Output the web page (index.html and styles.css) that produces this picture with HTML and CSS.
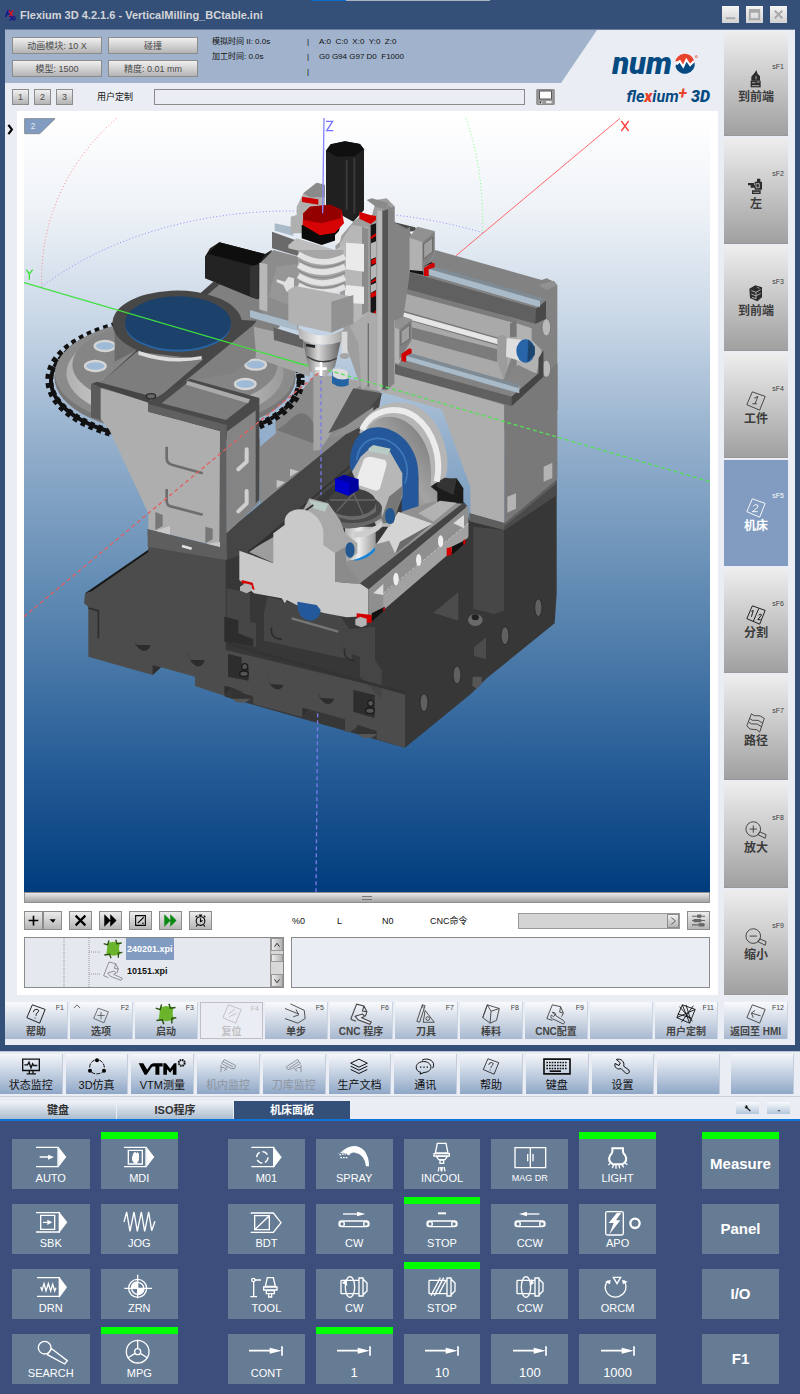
FILE: index.html
```
<!DOCTYPE html>
<html lang="zh-CN">
<head>
    <meta charset="UTF-8">
    <meta name="viewport" content="width=device-width, initial-scale=1.0">
    <title>Flexium 3D</title>
    <link rel="stylesheet" href="styles.css">
</head>
<body>
    <!-- Shared icon symbols -->
    <svg class="sprite" aria-hidden="true">
        <symbol id="tile" viewBox="0 0 24 24"><path d="M8 2 22 7 16 22 2 16Z"/></symbol>
        <symbol id="start" viewBox="0 0 60 60">
            <path d="M14 12 30 8 50 12 48 30 52 46 32 50 10 46 12 30Z" fill="#6ab42c" stroke="none"/>
            <path d="M2 14 14 18 18 4M38 2 42 14 56 12M58 40 46 42 46 56M24 58 20 46 4 48" stroke="#2c5212" stroke-width="4"/>
        </symbol>
        <symbol id="program" viewBox="0 0 60 60">
            <path d="M2 44 18 3 38 8 46 24 42 36M38 8 34 22 46 24M2 44 16 50"/>
            <path d="M14 36 34 30 40 36 32 40 58 52 54 58 22 46Z" fill="#e4e9f1"/>
        </symbol>
        <symbol id="belt" viewBox="0 0 102 72">
            <rect x="6" y="33" width="90" height="17" rx="8"/>
            <circle cx="15" cy="42" r="7"/><circle cx="87" cy="42" r="7"/>
        </symbol>
        <symbol id="feed" viewBox="0 0 102 72">
            <path d="M0 32h70M99 19v28" stroke-width="5"/><path class="solid" d="M62 23 98 32 62 41Z"/>
        </symbol>
        <symbol id="spindle" viewBox="0 0 102 72">
            <path d="M66 9h12v54h-12zM78 12l12 12v24l-12 12M12 16h54M12 56h54M12 16v40M66 16v40"/>
        </symbol>
    </svg>

    <!-- Simulation window -->
    <section class="window">
        <header class="title-bar">
            <svg class="title-icon" viewBox="0 0 36 36"><path d="M2 24 8 6h10M5 15h9" stroke="#14148c" stroke-width="4"/><path d="M12 4 24 24M24 4 12 24" stroke="#e01020" stroke-width="4"/><path d="M13 22h8v5h-5 5v6h-8M25 22v11h4q5-6 0-11z" stroke="#14148c" stroke-width="3"/></svg>
            <h1>Flexium 3D 4.2.1.6 - VerticalMilling_BCtable.ini</h1>
            <div class="window-controls">
                <button class="win-btn" aria-label="最小化"><svg viewBox="0 0 16 16"><path d="M3 12h10"/></svg></button>
                <button class="win-btn" aria-label="最大化"><svg viewBox="0 0 16 16"><path d="M3 3h10v10H3zM3 5h10"/></svg></button>
                <button class="win-btn" aria-label="关闭"><svg viewBox="0 0 16 16"><path d="M4 4l8 8M12 4l-8 8"/></svg></button>
            </div>
        </header>

        <div class="workspace">
            <main class="main">
                <div class="band">
                    <div class="info">
                        <div class="modes">
                            <button class="grey-btn">动画模块: 10 X</button>
                            <button class="grey-btn">碰撞</button>
                            <button class="grey-btn">模型: 1500</button>
                            <button class="grey-btn">精度: 0.01 mm</button>
                        </div>
                        <div class="times">
                            <p>模拟时间 II: 0.0s</p>
                            <p>加工时间: 0.0s</p>
                        </div>
                        <div class="marks">
                            <p>|</p>
                            <p>|</p>
                            <p>|</p>
                        </div>
                        <div class="axes">
                            <p>A:0 &nbsp;C:0 &nbsp;X:0 &nbsp;Y:0 &nbsp;Z:0</p>
                            <p>G0 G94 G97 D0 &nbsp;F1000</p>
                        </div>
                    </div>
                    <div class="brand-num">
                        <span>num</span>
                        <svg viewBox="0 0 70 60"><path d="M4 24A28 27 0 0 1 58 20L48 34 34 18 26 38 14 22Z" fill="#e8412c"/><path d="M4 38 14 24 26 40 36 20 48 36 60 26A28 27 0 0 1 4 38Z" fill="#064a82"/><path d="M8 32 17 23 27 39 36 19 47 35 57 24" fill="none" stroke="#fff" stroke-width="6"/><circle cx="65" cy="10" r="3" fill="none" stroke="#e8412c" stroke-width="2"/></svg>
                    </div>
                </div>

                <div class="custom-row">
                    <button class="grey-btn num-btn">1</button>
                    <button class="grey-btn num-btn">2</button>
                    <button class="grey-btn num-btn">3</button>
                    <label for="custom">用户定制</label>
                    <input class="text-box" id="custom" type="text">
                    <button class="save-btn" aria-label="保存"><svg viewBox="0 0 56 48"><path d="M2 2h52v44H2z" fill="#9a9a9a" stroke="#808080" stroke-width="3"/><path d="M10 6h36v24H10z" fill="#fff" stroke="#555" stroke-width="3"/><path d="M8 38h10v6H8zM30 36h16v7H30z" fill="#eee"/><path d="M10 38h5v5h-5z" fill="#222"/></svg></button>
                    <div class="brand-flex">fle<b>x</b>ium<sup>+</sup> <b class="three">3D</b></div>
                </div>

                <div class="stage">
                    <button class="expand-btn" aria-label="展开"><svg viewBox="0 0 20 36"><path d="M4 5 14 18 4 31"/></svg></button>
                    <div class="panel">
                        <!-- Machine view, one drawing unit is a third of a pixel -->
                        <svg class="view" viewBox="72 354 2058 2322" role="img" aria-label="机床">
                            <defs>
                                <linearGradient id="sky" x1="0" y1="0" x2="0" y2="1">
                                    <stop offset="0" stop-color="#ffffff"/><stop offset=".12" stop-color="#eef2f7"/><stop offset=".27" stop-color="#c6d5e5"/><stop offset=".42" stop-color="#93afcc"/><stop offset=".62" stop-color="#5f89b2"/><stop offset=".82" stop-color="#2a6099"/><stop offset="1" stop-color="#003c7d"/>
                                </linearGradient>
                                <linearGradient id="steel" x1="0" x2="1"><stop offset="0" stop-color="#6a6a6a"/><stop offset=".4" stop-color="#d8d8d8"/><stop offset="1" stop-color="#626262"/></linearGradient>
                                <linearGradient id="chrome" x1="0" x2="1"><stop offset="0" stop-color="#b0b0b0"/><stop offset=".45" stop-color="#ececec"/><stop offset="1" stop-color="#9a9a9a"/></linearGradient>
                                <linearGradient id="drum" x1="0" y1="1" x2="1" y2="0"><stop offset="0" stop-color="#5c5c5c"/><stop offset=".5" stop-color="#a4a4a4"/><stop offset="1" stop-color="#6e6e6e"/></linearGradient>
                            </defs>
                            <rect x="72" y="354" width="2058" height="2322" fill="url(#sky)"/>

                            <!-- Rotation arcs -->
                            <g fill="none" stroke-width="3" stroke-dasharray="3 7">
                                <path d="M350 355C205 480 118 660 125 860" stroke="#ff8a8a"/>
                                <path d="M125 860C310 720 580 630 890 633M1180 645C1280 655 1370 675 1448 698" stroke="#9090ff"/>
                                <path d="M1398 355C1435 460 1450 570 1448 698" stroke="#7dff7d"/>
                            </g>
                            <path d="M1860 355 1368 767" stroke="#ff6a6a" stroke-width="3"/>

                            <!-- Base casting -->
                            <g transform="translate(1020 1140)">
                                <path d="M-345 460 90 130 240 260 375 370 387 420 492 430 650 296 650 640 644 730 440 895 395 940 195 1103-345 950Z" fill="#373737"/>
                                <path d="M400 440 492 450V692L462 702 400 686Z" fill="#474747"/>
                                <path d="M388 398 492 428V450L388 424ZM492 428 650 298V345L492 450Z" fill="#5e5e5e"/>
                                <path d="M492 440 650 310V345L492 452Z" fill="#4a4a4a"/>
                                <path d="M280 698 355 637V722ZM402 802 438 772V838L402 828Z" fill="#4c4c4c"/>
                                <g fill="#606060" stroke="#2a2a2a" stroke-width="3"><ellipse cx="595" cy="683" rx="11" ry="27"/><ellipse cx="495" cy="767" rx="12" ry="27"/><ellipse cx="351" cy="885" rx="12" ry="27"/><ellipse cx="252" cy="968" rx="12" ry="27"/></g>
                                <ellipse cx="406" cy="720" rx="22" ry="18" fill="#6a6a6a"/><ellipse cx="406" cy="712" rx="11" ry="9" fill="#222"/>
                                <path d="M398 890h27v20l-14 16-14-8z" fill="#565656"/>
                            </g>
                            <g transform="translate(60 1290)">
                                <path d="M195 490 387 358V376L215 492Z" fill="#171717"/>
                                <path d="M385 300 617 360V660L1155 790V953L1070 928V908L1010 890 992 905H975V868L867 838 847 861 700 822V800L635 772 613 797 525 768V740L423 712 398 735 205 680V530L192 520 195 490 215 484 385 366Z" fill="#4c4c4c"/>
                                <path d="M398 735V706L423 712ZM613 797V768L635 772ZM847 861V834L867 838Z" fill="#2f2f2f"/>
                                <path d="M383 298 617 360V390L383 350Z" fill="#5e5e5e"/>
                                <path d="M620 475 690 490V575L708 580V650L620 630ZM742 500 960 555 995 610V690L732 632V550Z" fill="#464646"/>
                                <path d="M613 560 655 570V610L700 628V648L613 635ZM624 672 665 682V705L686 712V752L624 740ZM1000 780 1064 795V864L1000 845Z" fill="#2d2d2d"/>
                                <path d="M960 600 1065 590V690L1085 720V810L1020 740V680L960 660Z" fill="#454545"/>
                                <path d="M620 640 1155 790" stroke="#333" stroke-width="8"/>
                                <g fill="#2c2c2c"><path d="M345 612Q340 630 350 645L392 645Q385 665 368 662 338 650 345 612ZM506 658Q502 680 512 690L554 690Q548 712 530 709 502 695 506 658ZM745 728Q740 750 752 762L790 765Q785 780 768 778 740 765 745 728ZM896 770Q892 790 902 804L942 806Q936 824 920 822 890 808 896 770Z"/></g>
                                <g fill="none" stroke="#2d2d2d" stroke-width="5"><path d="M755 592Q748 625 786 628M974 655Q968 690 1005 692M205 534 235 542V625"/></g>
                                <g fill="#555"><ellipse cx="664" cy="802" rx="28" ry="16"/><ellipse cx="1042" cy="908" rx="28" ry="16"/></g>
                                <path d="M634 776 695 798V806H634ZM1012 884 1070 902V912H1012Z" fill="#333"/>
                                <g fill="#555" stroke="#1c1c1c" stroke-width="4"><circle cx="674" cy="710" r="9"/><ellipse cx="672" cy="731" rx="13" ry="8"/><circle cx="1052" cy="820" r="9"/><ellipse cx="1050" cy="842" rx="13" ry="8"/></g>
                                <path d="M815 565 955 605" stroke="#777" stroke-width="7"/>
                            </g>

                            <!-- Right column and cross rails -->
                            <g transform="translate(1080 330)">
                                <path d="M60 845 80 760 455 870 433 885V1238L331 1210V1130L245 898Z" fill="#aeaeae"/>
                                <path d="M433 885 592 760V1108L433 1240Z" fill="#797979"/>
                                <path d="M100 335 225 420 545 510 560 505 582 515 592 526V900L433 885 80 780Z" fill="#828282"/>
                                <path d="M433 880 592 760V900L433 960Z" fill="#797979"/>
                                <path d="M442 1160 468 1150V1196L442 1208ZM551 1070 577 1058V1104L551 1115Z" fill="#b4b4b4"/>
                                <path d="M98 335 165 352 175 362 110 368Z" fill="#4c4c4c"/>
                                <g fill="#b9b9b9" stroke="#666" stroke-width="2"><ellipse cx="559" cy="652" rx="13" ry="26"/><ellipse cx="559" cy="776" rx="13" ry="26"/></g>
                                <path d="M150 487 530 595 558 572V626L526 641 130 535Z" fill="#606060"/>
                                <path d="M528 597 558 572V626L526 641Z" fill="#494949"/>
                                <path d="M205 476 225 470 553 566 540 576Z" fill="#7e8b95"/><path d="M205 476 540 573V592L205 494Z" fill="#a9bac9"/>
                                <path d="M535 525 582 512 592 526 560 540Z" fill="#919191"/>
                                <path d="M120 545 470 640V700L430 810 120 725Z" fill="#a9a9a9"/>
                                <path d="M120 533 468 628V640L120 547ZM155 652 412 718V756L155 686Z" fill="#7b7b7b"/>
                                <path d="M450 640 470 632 472 680 450 682Z" fill="#777"/>
                                <path d="M122 612 418 696" stroke="#777" stroke-width="24"/>
                                <path d="M125 614 418 696" stroke="#e6e6e6" stroke-width="16"/>
                                <path d="M470 640 515 655V690L545 720 530 790 470 775Z" fill="#b2b2b2"/>
                                <path d="M412 680 428 674 442 682V770L432 808 412 756Z" fill="#9c9c9c"/>
                                <path d="M430 808 475 765 530 792 455 862Z" fill="#858585"/>
                                <path d="M440 684 490 690V756L438 740Z" fill="#dedede"/>
                                <ellipse cx="497" cy="723" rx="28" ry="35" fill="#2765a8"/><path d="M505 689 524 710V735L502 757Z" fill="#1d446d"/>
                                <path d="M80 757 455 860 536 790V745L550 722V800L455 888 80 785Z" fill="#606060"/><path d="M455 860 536 790V745L550 722V800L455 888Z" fill="#454545"/>
                                <path d="M140 735 478 828V850L140 752Z" fill="#a9bac9"/><path d="M148 728 480 824 475 834 140 738Z" fill="#7e8b95"/>
                                <path d="M120 370 150 350 150 480 120 545 110 620 75 625V380Z" fill="#858585"/>
                                <path d="M148 383 172 350 224 364V430L190 490 148 480Z" fill="#b1b1b1"/><path d="M187 396 224 364V430L187 490Z" fill="#808080"/><path d="M148 383 172 350 224 364 187 396Z" fill="#919191"/><path d="M191 402 218 382V425L191 447Z" fill="#9f9f9f" stroke="#666" stroke-width="3"/>
                                <path d="M80 640 105 612 155 628V690L116 762 80 750Z" fill="#b1b1b1"/><path d="M118 658 155 628V690L118 750Z" fill="#808080"/><path d="M80 645 105 612 155 628 118 658Z" fill="#919191"/><path d="M123 664 149 644V686L123 705Z" fill="#9f9f9f" stroke="#666" stroke-width="3"/>
                                <path d="M192 474 216 458 224 460V472L206 478V498H192ZM124 732 148 715 155 718V730L138 738V757L124 752Z" fill="#d00000"/>
                                <path d="M150 480 190 484V495L150 486ZM190 470 215 455V460Z" fill="#111"/>
                            </g>

                            <!-- Brace behind the spindle and the machine bed -->
                            <g transform="translate(60 330)">
                                <path d="M715 990 770 930 880 800 1060 830 1085 850 1060 960 720 1180Z" fill="#888"/>
                                <path d="M720 960 765 925 768 970 720 1010Z" fill="#93afcc"/>
                                <path d="M880 790 1040 815 1000 840 940 960 900 1020 880 1022Z" fill="#a5a5a5"/>
                                <path d="M800 940Q850 880 880 940V1000L770 960Z" fill="#737373"/>
                                <path d="M1000 835 1085 850 1060 915 925 970Z" fill="#555"/>
                                <path d="M620 1265 1000 955 1085 850 1050 1040 690 1325 620 1350Z" fill="#454545"/>
                                <path d="M925 985 1060 890V930L985 970Z" fill="#8f8f8f"/>
                                <path d="M690 1325 1000 1060" stroke="#303030" stroke-width="4"/>
                                <path d="M770 1110 796 1116 770 1135ZM810 1076 836 1084 810 1100Z" fill="#c4c4c4"/>
                            </g>

                            <!-- Tool magazine -->
                            <g transform="translate(60 330)">
                                <path d="M535 555 590 515 720 560 780 650 700 700Z" fill="#808080"/><path d="M535 555 580 515 600 522 555 560Z" fill="#444"/>
                                <ellipse cx="465" cy="810" rx="377" ry="184" fill="none" stroke="#111" stroke-width="24" stroke-dasharray="14 12"/>
                                <ellipse cx="465" cy="812" rx="372" ry="180" fill="none" stroke="#111" stroke-width="12" stroke-dasharray="20 6"/>
                                <ellipse cx="465" cy="802" rx="362" ry="172" fill="#777"/>
                                <ellipse cx="465" cy="790" rx="360" ry="166" fill="#8b8b8b"/>
                                <ellipse cx="465" cy="790" rx="326" ry="150" fill="url(#chrome)"/>
                                <ellipse cx="465" cy="764" rx="308" ry="134" fill="#858585"/>
                                <g fill="#9fbad6" stroke="#d5d5d5" stroke-width="7"><ellipse cx="255" cy="708" rx="31" ry="15"/><ellipse cx="226" cy="768" rx="31" ry="15"/><ellipse cx="707" cy="764" rx="31" ry="15"/><ellipse cx="676" cy="822" rx="31" ry="15"/></g>
                                <path d="M284 650V755L350 720Z" fill="#6b6b6b"/>
                                <path d="M660 640 870 690V800L710 745Z" fill="#a6a6a6"/>
                                <path d="M550 745 700 632 708 735 640 790 500 812 420 870Z" fill="#808080"/>
                                <path d="M760 652 850 680V715L762 690Z" fill="#606060"/>
                                <path d="M278 648A192 96 0 0 1 665 630L710 632 700 645 415 880 385 860 230 830 350 720Q285 690 278 648Z" fill="#474747"/>
                                <path d="M350 725 550 748 410 868 238 822Z" fill="#7d7d7d"/>
                                <path d="M355 722Q450 755 545 738V748Q450 766 355 734Z" fill="#dcdcdc"/>
                                <ellipse cx="474" cy="645" rx="158" ry="80" fill="#2764a4"/><ellipse cx="474" cy="639" rx="159" ry="80" fill="#1c426c"/>
                                <path d="M240 835 390 875V905L605 965V1312L385 1258V1210L268 960 240 925Z" fill="#aeaeae"/>
                                <path d="M213 822 242 832V930L213 922Z" fill="#5b5b5b"/>
                                <path d="M213 822 232 815 390 858 392 900 385 902 386 878Z" fill="#454545"/>
                                <path d="M385 875 510 806 718 864 716 900 620 968 600 962 385 905Z" fill="#4a4a4a"/>
                                <path d="M385 882 620 945V968L385 905Z" fill="#606060"/>
                                <path d="M425 880 502 818 690 874 618 930Z" fill="#7d7d7d"/><path d="M502 812 690 868 684 880 498 824Z" fill="#aaa"/>
                                <path d="M600 962 620 968V1350L598 1316Z" fill="#606060"/>
                                <path d="M620 965 716 895V1180L620 1270Z" fill="#848484"/><path d="M707 885 718 866V1170L707 1180Z" fill="#4a4a4a"/>
                                <ellipse cx="393" cy="859" rx="14" ry="8" fill="#666" stroke="#2b2b2b" stroke-width="4"/>
                                <g fill="none" stroke="#6d6d6d" stroke-width="8"><path d="M440 1010V1045Q440 1060 455 1064L548 1090M440 1137V1172Q440 1187 455 1190L548 1214"/></g>
                                <g fill="none" stroke="#cfcfcf" stroke-width="12" stroke-linecap="round"><path d="M680 1018V1055L655 1078M680 1143V1180L655 1204"/></g>
                                <path d="M406 1206 428 1215V1248L406 1260ZM556 1250 578 1256V1288L556 1300Z" fill="#777"/><path d="M406 1262 450 1248V1275ZM556 1302 600 1296V1312Z" fill="#c9c9c9"/>
                                <path d="M383 1258 620 1316V1350L383 1282Z" fill="#5e5e5e"/><path d="M486 1308 515 1316" stroke="#e2e2e2" stroke-width="8"/>
                            </g>

                            <!-- Spindle head -->
                            <g transform="translate(60 330)">
                                <path d="M918 122 932 103 975 94 1020 102 1032 118V300L1000 335 918 290Z" fill="#202020"/><path d="M918 122 932 103 975 94 1020 102 1032 118 1005 138 950 140Z" fill="#101010"/><path d="M980 150V300M1003 145V310" stroke="#3a3a3a" stroke-width="6"/>
                                <path d="M555 440 570 415 598 397 735 432 755 420V540L712 568 690 560 555 505Z" fill="#232323"/><path d="M555 440 598 397 735 432 712 470 565 432Z" fill="#0e0e0e"/><path d="M690 470 716 462V568L690 560Z" fill="#333"/>
                                <path d="M720 460 760 420 835 440V660L740 620 718 600Z" fill="#8c8c8c"/><path d="M718 458 742 462V605L718 598Z" fill="#b8b8b8"/>
                                <path d="M756 365 840 395V440L756 415Z" fill="#696969"/><path d="M764 340 820 352V378L764 362Z" fill="#a9bac9"/>
                                <path d="M690 600 832 640V662L690 622Z" fill="#a9bac9"/>
                                <path d="M770 470 840 460V600L745 560Z" fill="#969696"/>
                                <path d="M830 290 850 250 890 218 915 225V330L860 370 812 370V320L830 315Z" fill="#b0b0b0"/><path d="M850 250 890 218 915 225V262L870 262Z" fill="#8a8a8a"/>
                                <path d="M846 260 895 268V284L846 276Z" fill="#cc0000"/>
                                <path d="M945 400 1000 335 1020 320 1050 340 1068 270 1100 265 1125 290V820L1100 842 1025 838 975 700Z" fill="#9e9e9e"/>
                                <path d="M995 345 1045 352V620L1000 640V570L975 520 960 400Z" fill="#b7b7b7"/>
                                <path d="M1026 350 1045 356V605L1026 615Z" fill="#8b8b8b"/>
                                <path d="M1052 345 1068 340V610L1052 618Z" fill="#161616"/>
                                <path d="M1018 305 1050 315 1068 318V330L1052 342 1018 326ZM1052 380 1068 370V378L1052 388ZM1054 450 1068 444V460L1054 464ZM1052 515 1068 505V512L1052 520ZM1052 550 1068 543V558L1052 564ZM1050 618 1068 600V608Z" fill="#d40000"/>
                                <path d="M1053 400 1068 394V442L1053 448ZM1053 470 1068 462V500L1053 510ZM1053 525 1068 518V540L1053 548Z" fill="#b7b7b7"/>
                                <path d="M1072 300 1086 304V838L1072 842Z" fill="#b9b9b9"/><path d="M1086 300 1122 290V820L1100 842 1086 838Z" fill="#858585"/>
                                <path d="M1088 304 1104 298V836L1088 838Z" fill="#555"/><path d="M1040 270 1055 265 1104 278 1100 298 1070 292Z" fill="#8a8a8a"/>
                                <path d="M1104 285 1120 305 1120 335 1168 360V500L1150 620 1104 640Z" fill="#838383"/>
                                <path d="M990 650 1045 605 1072 612V842L1050 838V820L1025 838 1015 700Z" fill="#ababab"/><path d="M1045 640V830" stroke="#6e6e6e" stroke-width="4"/>
                                <path d="M978 398 1032 402V485L978 478ZM975 525 1032 530V582L975 578Z" fill="#eaeaea"/>
                                <path d="M805 405 830 385 945 420 975 400V430L935 445 805 415Z" fill="#bdbdbd"/>
                                <path d="M835 420H970L978 540 835 540Z" fill="#a6a6a6"/>
                                <g fill="none" stroke="#e3e3e3" stroke-width="17"><path d="M835 432Q900 475 975 440M835 465Q900 505 975 470M835 497Q900 538 975 503M835 526Q905 565 975 530"/></g>
                                <g fill="none" stroke="#8b8b8b" stroke-width="4"><path d="M835 450Q900 490 975 455M835 482Q900 522 975 487M835 513Q900 552 975 518"/></g>
                                <path d="M845 345 960 350 950 390 905 405 845 385Z" fill="#0b0b0b"/>
                                <path d="M850 310 870 290 930 284 965 300 972 340 945 368 900 376 848 345Z" fill="#d60404"/><path d="M850 310 870 290 930 284 965 300 962 325 905 340 850 330Z" fill="#940000"/>
                                <path d="M945 375 970 350 960 395 945 408Z" fill="#ececec"/>
                                <path d="M770 508 795 515 805 500 822 505V540L800 545 790 525 770 516Z" fill="#e0e0e0"/>
                                <path d="M805 540 825 528 1000 560 978 640 935 668 805 640Z" fill="#b2b2b2"/><path d="M934 575 1000 555V640L934 668Z" fill="#929292"/>
                                <path d="M832 650Q905 700 978 655V690Q905 720 838 685Z" fill="url(#chrome)"/>
                                <path d="M850 695Q905 715 962 695L945 770 915 800 870 785 858 740Z" fill="url(#steel)"/>
                                <path d="M858 705 885 710" stroke="#222" stroke-width="8"/><path d="M862 740Q905 768 950 745" stroke="#3f3f3f" stroke-width="4" fill="none"/>
                                <path d="M965 665H982V735H965Z" fill="#dadada"/><ellipse cx="974" cy="738" rx="15" ry="9" fill="#a5a5a5"/>
                                <path d="M936 785H986V825Q960 838 936 820Z" fill="#2362a3"/><path d="M938 778Q960 770 986 785V805Q960 815 938 798Z" fill="#dcdcdc"/>
                            </g>

                            <!-- Tilting table -->
                            <g transform="translate(1020 1140)">
                                <path d="M280 300 350 295 370 325V375L270 400Z" fill="#1c1c1c"/><path d="M292 290 350 298 340 345 290 320Z" fill="#343434"/>
                                <path d="M58 160C75 75 175 45 240 85 305 125 335 230 318 290L270 320 180 150Z" fill="#b5b5b5"/>
                                <path d="M66 150C95 85 175 75 225 110 285 155 305 240 290 305" fill="none" stroke="#ececec" stroke-width="18"/>
                                <path d="M80 150C115 95 180 100 222 145 275 200 275 260 272 320L292 335V365L235 405V290Z" fill="url(#drum)"/>
                                <path d="M30 260C28 175 70 138 120 142 190 150 235 215 235 280V405L185 392V330L60 330Z" fill="#24589a"/>
                                <path d="M50 240C60 170 120 160 165 195 200 225 210 270 195 310" fill="none" stroke="#3d78b8" stroke-width="5"/>
                                <path d="M185 395 275 365 295 365 378 372 85 625 0 600-60 560-80 500 110 490Z" fill="#919191"/>
                                <path d="M175 395 280 432 165 520 148 482 110 492Z" fill="#d4d4d4"/><path d="M180 485 282 428 165 522Z" fill="#6c6c6c"/>
                                <path d="M235 400 300 362 350 368 280 425Z" fill="#b2b2b2"/>
                                <path d="M36 275 62 230 90 205 150 215 187 280V350L150 440 110 440 60 330Z" fill="#b7b7b7"/><path d="M147 350 187 318V345L160 430 120 430Z" fill="#777"/>
                                <path d="M72 238Q80 226 100 232L135 240Q142 246 138 262L120 325Q115 335 100 330L55 315 52 290Z" fill="#ececec"/>
                                <path d="M86 205 100 195 152 206 145 225 86 214Z" fill="#b8cbc4"/>
                                <ellipse cx="150" cy="408" rx="15" ry="24" fill="#22588f"/>
                                <path d="M15 440H107V500Q70 545 15 540Z" fill="url(#chrome)"/><path d="M40 540Q80 530 105 502V512Q85 536 50 542Z" fill="#1684d8"/>
                                <path d="M-50 400V425Q35 470 125 415V385Z" fill="#686868"/><ellipse cx="36" cy="385" rx="90" ry="44" fill="#4a4a4a"/>
                                <path d="M-35 370V395Q40 445 108 395V370Z" fill="#6b6b6b"/><ellipse cx="36" cy="367" rx="72" ry="42" fill="#414141"/>
                                <path d="M-30 360 105 360M36 330 70 405M50 330-10 395" stroke="#666" stroke-width="4"/>
                                <path d="M42 455Q95 455 127 420V440Q100 470 42 473Z" fill="#cdcdcd"/>
                                <path d="M-15 296 12 284 56 298V330L26 347-15 332Z" fill="#0000a0"/><path d="M-15 296 28 308 26 347-15 332Z" fill="#0000cc"/>
                                <!-- Front bell housing -->
                                <path d="M-110 390-92 355-35 370 0 420 15 460 52 490V520L15 550 60 600-15 605-48 520Z" fill="#a8a8a8"/>
                                <path d="M-92 360-35 372-45 395-80 385Z" fill="#b7cbc4"/>
                                <path d="M-275 515-198 470V550Z" fill="#9d9d9d"/><path d="M-275 515-80 375" stroke="#2e2e2e" stroke-width="5"/>
                                <path d="M-302 512-265 525-200 550V460L-166 435V420C-160 375-70 370-50 450V495L-15 520V605L60 612 85 625V708L20 712-45 700-120 680-160 660-165 670-175 655-258 640-302 600Z" fill="#c9c9c9"/>
                                <path d="M-15 520 15 500 20 555 60 600 55 612-15 605Z" fill="#8b8b8b"/>
                                <ellipse cx="30" cy="510" rx="14" ry="23" fill="#22588f"/>
                                <path d="M85 628 385 376V468L130 690 85 712Z" fill="#8f8f8f"/><path d="M60 610 368 370 382 376 85 628Z" fill="#454545"/>
                                <path d="M130 645 385 430V472L130 690Z" fill="#a2a2a2"/><path d="M130 640 385 430" stroke="#c8c8c8" stroke-width="3" stroke-dasharray="9 5"/>
                                <path d="M100 640 130 612V645ZM340 430 372 405V445Z" fill="#dcdcdc"/>
                                <g fill="#eee"><ellipse cx="168" cy="597" rx="8" ry="19"/><ellipse cx="236" cy="540" rx="8" ry="18"/><ellipse cx="302" cy="484" rx="8" ry="18"/></g>
                                <path d="M95 700 134 680V690L95 725ZM335 500 376 480V490L335 525Z" fill="#111"/>
                                <path d="M50 700 95 705V728H80L50 715ZM130 684 134 680V692L130 695ZM320 505 335 500V525L320 528ZM370 480 376 478V492L370 496ZM-295 600-262 608-256 630-262 628-268 616-295 610Z" fill="#d40000"/>
                                <path d="M46 718 60 710 80 716V735L65 742 46 735ZM-300 620-285 610-265 615V632L-280 640-300 632Z" fill="#b4b4b4"/>
                                <path d="M-128 665Q-130 715-90 722-60 720-58 690L-70 675Z" fill="#23599a"/>
                            </g>

                            <!-- Axes over the model -->
                            <g fill="none" stroke-width="4">
                                <path d="M72 848 925 1098" stroke="#3fe03f"/>
                                <path d="M965 1105 2130 1445" stroke="#55e055" stroke-dasharray="12 8"/>
                                <path d="M972 354 968 640" stroke="#8585ff"/>
                                <path d="M963 1120V1485M953 2140 948 2676" stroke="#7a7ae8" stroke-dasharray="12 9"/>
                                <path d="M955 1120 710 1320 72 1850" stroke="#e06060" stroke-dasharray="12 9"/>
                                <path d="M946 1106h34M963 1086v42" stroke="#fff" stroke-width="8"/>
                                <path d="M978 364h20L980 392h20" stroke="#7373ff"/>
                                <path d="M1864 363l22 30M1886 363l-22 30" stroke="#ff4040"/>
                                <path d="M79 809l9 13 10-13M88 822v17" stroke="#3fe03f"/>
                            </g>
                            <path d="M74 356H165L119 401H74Z" fill="#819cc0" stroke="#848c98" stroke-width="3"/>
                            <text class="view-no" x="92" y="388">2</text>
                        </svg>
                        <div class="splitter"><span></span></div>

                        <div class="tools">
                            <div class="split-btn">
                                <button class="tool-btn" aria-label="添加"><svg viewBox="0 0 24 24"><path d="M12 3v18M3 12h18"/></svg></button><button class="tool-btn" aria-label="更多"><svg viewBox="0 0 24 24"><path d="M10 11h5l-2 3z"/></svg></button>
                            </div>
                            <button class="tool-btn" aria-label="删除"><svg viewBox="0 0 24 24"><path d="M3 3l18 18M21 3 3 21" stroke-width="4"/></svg></button>
                            <button class="tool-btn" aria-label="快进"><svg viewBox="0 0 24 24"><path d="M2 4l8 8-8 8zM13 4l8 8-8 8z" fill="#000"/></svg></button>
                            <button class="tool-btn thin" aria-label="编辑"><svg viewBox="0 0 24 24"><path d="M3 3h18v18H3zM7 17 18 6M15 17h3"/></svg></button>
                            <button class="tool-btn go" aria-label="运行"><svg viewBox="0 0 24 24"><path d="M2 4l8 8-8 8zM13 4l8 8-8 8z"/></svg></button>
                            <button class="tool-btn thin" aria-label="计时"><svg viewBox="0 0 24 24"><circle cx="12" cy="13" r="8"/><path d="M12 8v6l4-2M12 5V2M9 2h6M3 6l3-3M18 3l3 3M6 20l-2 3M18 20l2 3"/></svg></button>
                            <span class="status">%0</span>
                            <span class="status">L</span>
                            <span class="status">N0</span>
                            <label for="cnc">CNC命令</label>
                            <div class="command">
                                <input class="text-box" id="cnc" type="text">
                                <button class="grey-btn" aria-label="发送"><svg viewBox="0 0 12 12"><path d="M4 2l5 4-5 4"/></svg></button>
                            </div>
                            <button class="tool-btn sliders" aria-label="选项"><svg viewBox="0 0 36 36"><path d="M0 6h36M0 18h36M0 30h36"/><path d="M16 3h8v6h-8zM6 15h18v6H6zM20 27h12v6H20z" fill="#666"/></svg></button>
                        </div>

                        <div class="lists">
                            <div class="tree">
                                <svg class="tree-lines" viewBox="0 0 78 50"><path d="M39 0v50M64 0v50M64 14h12M64 36h12"/></svg>
                                <ul>
                                    <li class="selected"><svg><use href="#start"/></svg><span>240201.xpi</span></li>
                                    <li><svg><use href="#program"/></svg><span>10151.xpi</span></li>
                                </ul>
                                <div class="scroll">
                                    <button aria-label="上移"><svg viewBox="0 0 12 12"><path d="M3 8l3-4 3 4"/></svg></button>
                                    <span class="thumb"></span>
                                    <button aria-label="下移"><svg viewBox="0 0 12 12"><path d="M3 4l3 4 3-4"/></svg></button>
                                </div>
                            </div>
                            <textarea class="text-box log" aria-label="消息"></textarea>
                        </div>
                    </div>
                </div>
            </main>

            <nav class="side">
                <button class="side-key"><kbd>sF1</kbd><svg class="model" viewBox="0 0 48 54"><path d="M20 8l5-8 4 12 7 6v14H10V20z"/><path d="M8 32h30v20H8z"/><path class="cut" d="M12 38h10M26 36h9M12 47h22M24 18v10"/></svg><span>到前端</span></button>
                <button class="side-key"><kbd>sF2</kbd><svg class="model" viewBox="0 0 48 54"><path d="M20 14h22v24H20zM0 18h18v7H0zM8 25h16v7H8zM12 40h26v11H12zM27 5h10v10H27z"/><path class="cut" d="M24 20h10v12H24zM16 46h18"/></svg><span>左</span></button>
                <button class="side-key"><kbd>sF3</kbd><svg class="model" viewBox="0 0 48 54"><path d="M4 14 22 4 42 10V40L28 52 6 42Z"/><path class="cut" d="M10 20l14 5 14-8M10 30l14 6 14-8M12 40l12 4M24 25v20M28 10l6 3"/></svg><span>到前端</span></button>
                <button class="side-key"><kbd>sF4</kbd><svg viewBox="0 0 24 24"><use href="#tile"/><path d="M10 9l4-2-3 8M8 15h5"/></svg><span>工件</span></button>
                <button class="side-key active"><kbd>sF5</kbd><svg viewBox="0 0 24 24"><use href="#tile"/><path d="M9 10q2-3 5-1 1 2-2 4l-4 3h6"/></svg><span>机床</span></button>
                <button class="side-key dark"><kbd>sF6</kbd><svg viewBox="0 0 24 24"><use href="#tile"/><path d="M15 5 9 19M7 8l2-1-2 7M15 12q3-2 3 0l-4 5h3"/></svg><span>分割</span></button>
                <button class="side-key"><kbd>sF7</kbd><svg viewBox="0 0 24 24"><path d="M7 2q3 3 6 2t8 3l-5 15q-3-4-7-3t-7-4zM5 7q3 3 6 2t8 3M4 11q3 3 6 2t8 3"/></svg><span>路径</span></button>
                <button class="side-key"><kbd>sF8</kbd><svg viewBox="0 0 24 24"><circle cx="9" cy="11" r="8"/><path d="M9 7v8M5 11h8M16 14l7 3-1 4-8-4z"/></svg><span>放大</span></button>
                <button class="side-key"><kbd>sF9</kbd><svg viewBox="0 0 24 24"><circle cx="9" cy="11" r="8"/><path d="M5 11h8M16 14l7 3-1 4-8-4z"/></svg><span>缩小</span></button>
            </nav>

            <nav class="f-keys">
                <button class="f-key dark"><kbd>F1</kbd><svg viewBox="0 0 24 24"><use href="#tile"/><path d="M9 10q1-4 4-3 4 1 0 4-1 1-1 3M11 16v1"/></svg><span>帮助</span></button>
                <button class="f-key"><kbd>F2</kbd><svg class="caret" viewBox="0 0 10 6"><path d="M1 5l4-4 4 4"/></svg><svg viewBox="-3 -5 30 30"><use href="#tile" width="24" height="24"/><path d="M12 7v10M7 12h10"/></svg><span>选项</span></button>
                <button class="f-key"><kbd>F3</kbd><svg viewBox="0 0 60 60"><use href="#start"/></svg><span>启动</span></button>
                <button class="f-key" disabled><kbd>F4</kbd><svg viewBox="0 0 24 24"><use href="#tile"/><path d="M8 12l7-5M9 15l8-4"/></svg><span>复位</span></button>
                <button class="f-key"><kbd>F5</kbd><svg viewBox="0 0 24 24"><path d="M6 1l15 7 1 9-8 5-14-5M0 6l15 6M12 7l3 6-6 2"/></svg><span>单步</span></button>
                <button class="f-key"><kbd>F6</kbd><svg class="fine" viewBox="0 0 60 60"><use href="#program"/></svg><span>CNC 程序</span></button>
                <button class="f-key"><kbd>F7</kbd><svg viewBox="0 0 24 24"><path d="M2 20 8 2l3 1-6 18zM11 8l10 13H9zM8 2l1 4"/><circle cx="14" cy="17" r="2"/></svg><span>刀具</span></button>
                <button class="f-key"><kbd>F8</kbd><svg viewBox="0 0 24 24"><path d="M8 2l13 4-3 13-7 3-8-6zM8 2 3 16M8 2l4 7-1 13M12 9l9-3"/></svg><span>棒料</span></button>
                <button class="f-key"><kbd>F9</kbd><svg viewBox="0 0 24 24"><path d="M2 17 8 2l9 2 3 7-2 4M17 4l-1 6 4 1M2 17l6 2M7 13q-2 4 3 5l10 5q3-2 0-4l-8-5q0-4-4-4l3 3-2 2z"/></svg><span>CNC配置</span></button>
                <button class="f-key" aria-label="F10"></button>
                <button class="f-key dark"><kbd>F11</kbd><svg viewBox="0 0 24 24"><use href="#tile"/><path d="M8 2l8 20M22 7 2 16M5 4l14 16M20 3 7 21M3 12l14 4M12 2l5 16"/></svg><span>用户定制</span></button>
            </nav>
            <button class="f-key back"><kbd>F12</kbd><svg viewBox="0 0 24 24"><use href="#tile"/><path d="M7 11l10 3M11 8l-4 3 2 5"/></svg><span>返回至 HMI</span></button>
        </div>
    </section>

    <!-- HMI application bar -->
    <nav class="app-bar">
        <button class="app-btn"><svg viewBox="0 0 54 50"><path d="M2 3h50v34H2zM22 37v8M33 37v8M14 47h28M7 20h10l4-8 6 17 5-12 3 5h11" stroke-width="4"/></svg><span>状态监控</span></button>
        <button class="app-btn"><svg viewBox="0 0 54 50"><path d="M20 6Q5 12 5 28M34 6q14 6 15 22M10 42q16 10 34 0" stroke-width="3" stroke-dasharray="12 4"/><path class="fill" d="M27 0a6 6 0 1 1 0 12 6 6 0 0 1 0-12M6 32a6 6 0 1 1 0 12 6 6 0 0 1 0-12M48 32a6 6 0 1 1 0 12 6 6 0 0 1 0-12"/></svg><span>3D仿真</span></button>
        <button class="app-btn"><svg class="wide" viewBox="413 518 146 50"><path d="M415 533h14l12 20 10-15q4-5 10-5h27v10h-10v25h-12v-25h-6q-4 0-6 3l-15 22h-6zM490 568v-35h8l13 17 12-17h7v35h-11v-17l-8 11-10-11v17z" fill="#000" stroke="none"/><circle cx="546" cy="532" r="9" stroke-width="6" stroke-dasharray="5 2"/></svg><span>VTM测量</span></button>
        <button class="app-btn" disabled><svg viewBox="0 0 54 50"><path d="M16 4 50 22l-4 10-12-2L8 16zM12 10l30 16M6 20v22M6 28h10l8 8M24 26l-8 12"/></svg><span>机内监控</span></button>
        <button class="app-btn" disabled><svg viewBox="0 0 54 50"><path d="M38 4 4 26l4 8 12-2 26-16zM42 10 12 30M48 20v22M48 28H38l-8 8M28 30l8 10"/></svg><span>刀库监控</span></button>
        <button class="app-btn"><svg viewBox="0 0 54 50"><path d="M27 3 52 15 27 27 2 15zM2 24l25 12 25-12M2 34l25 12 25-12" stroke-width="3"/></svg><span>生产文档</span></button>
        <button class="app-btn"><svg viewBox="0 0 54 50"><path d="M22 10c-28 2-26 30-8 32l-2 6 12-5c30-2 26-33-2-33zM18 6c18-10 44 4 32 24" stroke-width="3"/><path d="M12 27h4M22 27h4M32 27h4" stroke-width="4"/></svg><span>通讯</span></button>
        <button class="app-btn"><svg class="unit" viewBox="1 1 22 22"><use href="#tile" width="24" height="24"/><path d="M9 10q1-4 4-3 4 1 0 4-1 1-1 3M11 16v1"/></svg><span>帮助</span></button>
        <button class="app-btn"><svg class="wide keyboard" viewBox="0 0 84 50"><path d="M3 3h78v44H3z" stroke-width="5"/><path d="M10 13h64M10 22h60M10 31h64" stroke-width="4" stroke-dasharray="5 3"/><path d="M20 39h34" stroke-width="5"/></svg><span>键盘</span></button>
        <button class="app-btn"><svg viewBox="0 0 54 50"><path d="M10 4l12 10-4 8-12-6c-3 12 8 20 18 15l14 14c6 4 14-2 10-9L32 24C36 12 24-1 10 4z" stroke-width="3"/></svg><span>设置</span></button>
        <button class="app-btn" aria-label="空"></button>
        <button class="app-btn last" aria-label="空"></button>
    </nav>

    <div class="tab-bar">
        <div class="tabs" role="tablist">
            <button class="tab" role="tab">键盘</button>
            <button class="tab" role="tab">ISO程序</button>
            <button class="tab active" role="tab" aria-selected="true">机床面板</button>
        </div>
        <button class="mini-btn" aria-label="设置"><svg viewBox="0 0 20 20"><path d="M4 2l5 3v4l8 8-2 2-8-8H4L1 6l4 1z" fill="#111"/></svg></button>
        <button class="mini-btn" aria-label="最小化"><svg viewBox="0 0 20 20"><path d="M7 16h6v2H7z" fill="#111"/></svg></button>
    </div>

    <!-- Machine panel -->
    <section class="machine-panel">
        <div class="group modes-group">
            <button class="key"><svg viewBox="103 91 102 72"><path d="M109 98h66v58h-66M120 127h30"/><path class="solid" d="M176 96l24 31-24 31zM145 120l18 7-18 8z"/></svg><span>AUTO</span></button>
            <button class="key lit"><svg viewBox="368 91 102 72"><path d="M374 98h66v58h-66M387 107h42v41h-42z"/><path class="solid" d="M441 96l24 31-24 31zM398 128l5-14 5-2 4 4 3-4 4 6v18l-6 10h-9l-6-10z"/></svg><span>MDI</span></button>
            <button class="key"><svg viewBox="103 284 102 72"><path d="M109 292h70v58h-70M123 300h42v42h-42zM130 321h18"/><path class="solid" d="M179 290l24 31-24 31zM143 313l15 8-15 8z"/></svg><span>SBK</span></button>
            <button class="key"><svg viewBox="368 284 102 72"><path d="M374 320l8-30 10 58 12-58 10 58 12-58 10 58 12-58 9 56 10-28"/></svg><span>JOG</span></button>
            <button class="key"><svg viewBox="103 478 102 72"><path d="M112 486h67v56h-67M123 514l4 10 6-20 6 22 7-22 7 22 6-20 6 20 4-10"/><path class="solid" d="M179 484l23 31-23 31z"/></svg><span>DRN</span></button>
            <button class="key"><svg viewBox="368 478 102 72"><circle cx="415" cy="518" r="27"/><circle cx="415" cy="518" r="18"/><path d="M415 477v71M375 518h83"/><path class="solid" d="M415 518V497q-20 1-21 21zM415 518v21q20-1 21-21z"/></svg><span>ZRN</span></button>
            <button class="key"><svg viewBox="103 671 102 72"><circle cx="135" cy="694" r="19"/><path d="M156 697l47 36-8 10-52-28z"/></svg><span>SEARCH</span></button>
            <button class="key lit"><svg viewBox="368 671 102 72"><circle cx="415" cy="706" r="34"/><circle cx="415" cy="706" r="9"/><path d="M415 672v25M407 711l-22 14M423 711l22 14"/></svg><span>MPG</span></button>
        </div>

        <div class="group machine-group">
            <button class="key"><svg viewBox="753 91 102 72"><path d="M760 98h67v58h-67"/><circle cx="793" cy="128" r="17" stroke-dasharray="18 8"/><path class="solid" d="M827 96l24 32-24 31z"/></svg><span>M01</span></button>
            <button class="key"><svg viewBox="1010 91 102 72"><path class="solid" d="M1018 116q42-40 75-7 14 20 13 46h-9q-4-36-32-41-14-2-18 8-10-12-39-6z"/><path d="M1018 122q8-8 30-2M1020 129h24" stroke-dasharray="5 3"/></svg><span>SPRAY</span></button>
            <button class="key"><svg viewBox="72 91 102 72"><path d="M109 86h26l6 29h-38zM99 117h46v7H99zM106 125h33l-7 10h-19zM117 136h11v10h-11zM114 157l-2 13M119 157l2 13M124 157l-2 13M129 157l3 13"/></svg><span>INCOOL</span></button>
            <button class="key"><svg viewBox="336 91 102 72"><path d="M342 99h92v60h-92zM388 99v60M380 118v22M396 118v22"/></svg><span class="long">MAG DR</span></button>
            <button class="key lit"><svg viewBox="600 91 102 72"><path d="M634 101h32q-2 14 6 20 10 18-8 28h-28q-18-10-8-28 8-6 6-20z" stroke-width="6"/><path d="M622 151l6-5M634 160l4-10M645 162v-11M656 161l-2-10M668 158l-5-9M679 150l-7-5"/></svg><span>LIGHT</span></button>

            <button class="key"><svg viewBox="753 284 102 72"><path d="M758 293h68l23 29-23 29h-68M770 301h44v42h-44zM770 343l44-42"/></svg><span>BDT</span></button>
            <button class="key"><svg viewBox="0 0 102 72"><use href="#belt"/><path d="M18 12h45"/><path class="solid" d="M60 5l25 7-25 7z"/></svg><span>CW</span></button>
            <button class="key lit"><svg viewBox="0 0 102 72"><use href="#belt"/><path d="M39 10h24" stroke-width="6"/></svg><span>STOP</span></button>
            <button class="key"><svg viewBox="0 0 102 72"><use href="#belt"/><path d="M40 12h39"/><path class="solid" d="M42 5l-24 7 24 7z"/></svg><span>CCW</span></button>
            <button class="key"><svg viewBox="600 284 102 72"><rect x="614" y="289" width="53" height="70" rx="5"/><path class="solid" d="M648 292l-25 31h15l-13 34 33-42h-13l16-23z"/><circle cx="702" cy="324" r="14" stroke-width="7"/></svg><span>APO</span></button>

            <button class="key"><svg viewBox="753 478 102 72"><circle cx="766" cy="493" r="5"/><path d="M771 493h18M767 498v44M757 543h20M808 486h18l6 26h-30zM797 514h40v9h-40zM805 525h24v9h-24zM812 534h9v10h-9z"/></svg><span>TOOL</span></button>
            <button class="key"><svg viewBox="0 0 102 72"><use href="#spindle"/><ellipse cx="39" cy="36" rx="14" ry="31"/><path class="solid" d="M28 12l3 20-16-8z"/></svg><span>CW</span></button>
            <button class="key lit"><svg viewBox="0 0 102 72"><use href="#spindle"/><path d="M46 8 18 62M56 8 28 62M62 18 42 56"/></svg><span>STOP</span></button>
            <button class="key"><svg viewBox="0 0 102 72"><use href="#spindle"/><ellipse cx="39" cy="36" rx="14" ry="31"/><path class="solid" d="M54 12l-4 22 13-10z"/></svg><span>CCW</span></button>
            <button class="key"><svg viewBox="600 478 102 72"><path d="M621 495q-16 20-2 38 14 15 34 10 22-10 22-30 0-10-6-18M637 485h22l-11 19z" stroke-width="4"/><path class="solid" d="M612 498l17-6-2 14zM680 498l-17-6 3 14z"/></svg><span>ORCM</span></button>

            <button class="key"><svg viewBox="0 0 102 72"><use href="#feed"/></svg><span>CONT</span></button>
            <button class="key lit"><svg viewBox="0 0 102 72"><use href="#feed"/></svg><span class="num">1</span></button>
            <button class="key"><svg viewBox="0 0 102 72"><use href="#feed"/></svg><span class="num">10</span></button>
            <button class="key"><svg viewBox="0 0 102 72"><use href="#feed"/></svg><span class="num">100</span></button>
            <button class="key"><svg viewBox="0 0 102 72"><use href="#feed"/></svg><span class="num">1000</span></button>
        </div>

        <div class="group page-group">
            <button class="key page lit">Measure</button>
            <button class="key page">Panel</button>
            <button class="key page">I/O</button>
            <button class="key page">F1</button>
        </div>
    </section>
</body>
</html>
```
FILE: styles.css
```
:root {
    --frame: #355078;
    --pale: #eaedf3;
    --band: #a0b2cc;
    --panel: #3c4f7c;
    --key: #667c95;
    --accent: #819cc0;
    --line: #8c8c8c;
}

* {
    box-sizing: border-box;
}

body {
    margin: 0;
    min-height: 100vh;
    display: flex;
    flex-direction: column;
    background: var(--pale);
    color: #111;
    font-family: "Liberation Sans", "Noto Sans CJK SC", sans-serif;
    font-size: 9px;
    line-height: 12px;
}

button,
input,
textarea {
    font: inherit;
    color: inherit;
    padding: 0;
    margin: 0;
    border-radius: 0;
}

button {
    border: none;
    white-space: nowrap;
}

p,
ul,
h1 {
    margin: 0;
    padding: 0;
}

svg {
    display: block;
    fill: none;
    stroke: currentColor;
    overflow: visible;
}

.sprite {
    position: absolute;
    width: 0;
    height: 0;
}

/* Window frame */
.window {
    border: 5px solid var(--frame);
    border-top: none;
    border-bottom-width: 6px;
    background: var(--pale);
}

.title-bar {
    display: flex;
    align-items: center;
    height: 30px;
    background: linear-gradient(90deg, transparent 306px, #0a6cc8 306px, #0a6cc8 341px, #aab4c0 341px, #aab4c0 485px, transparent 485px) no-repeat 0 0 / 100% 1px, var(--frame);
    border-bottom: 1px solid #6b7f9f;
}

.title-icon {
    width: 12px;
    height: 12px;
    margin-right: 3px;
}

.title-bar h1 {
    flex: 1;
    font-size: 11px;
    font-weight: bold;
    color: #d3d5d9;
}

.window-controls {
    display: flex;
    gap: 7px;
    margin-right: 8px;
}

.win-btn {
    width: 17px;
    height: 17px;
    padding: 1px;
    background: linear-gradient(#f4f4f4, #d2d2d2);
    color: #a8a8a8;
}

.win-btn svg {
    stroke-width: 2;
}

.workspace {
    display: grid;
    grid-template-columns: 1fr 64px;
    column-gap: 6px;
    row-gap: 7px;
    padding: 0 7px 6px 0;
}

.main {
    min-width: 0;
}

/* Header band */
.band {
    display: flex;
    height: 53px;
}

.info {
    flex: 1;
    display: flex;
    padding: 7px 0 0 7px;
    background: var(--band);
    clip-path: polygon(0 0, 100% 0, calc(100% - 36px) 100%, 0 100%);
    font-size: 8px;
    line-height: 15px;
}

.grey-btn {
    border: 1px solid var(--line);
    background: linear-gradient(#f0f0f0, #b4b4b4);
    color: #4c4c4c;
}

.modes {
    display: grid;
    grid-template-columns: 90px 90px;
    grid-template-rows: 17px 17px;
    gap: 6px;
    font-size: 9px;
    line-height: 12px;
}

.times {
    width: 95px;
    margin-left: 14px;
    margin-top: -3px;
}

.marks {
    width: 12px;
    margin-top: -3px;
}

.axes {
    margin-top: -3px;
}

.brand-num {
    width: 121px;
    display: flex;
    align-items: center;
    justify-content: flex-end;
    gap: 2px;
    padding: 14px 20px 0 0;
    color: #064a82;
    font: italic 900 31px/31px Roboto, sans-serif;
}

.brand-num svg {
    width: 24px;
    height: 21px;
    stroke: none;
}

.custom-row {
    display: flex;
    align-items: center;
    height: 28px;
    padding-left: 7px;
}

.num-btn {
    width: 17px;
    height: 16px;
    margin-right: 5px;
}

.custom-row label {
    margin: 0 21px 0 19px;
}

.custom-row .text-box {
    flex: 1;
    min-width: 0;
    height: 16px;
}

.text-box {
    border: 1px solid #8a8a8a;
    background: var(--pale);
}

.save-btn {
    width: 19px;
    height: 16px;
    margin-left: 11px;
    background: none;
}

.save-btn svg {
    width: 19px;
    height: 16px;
    stroke: none;
}

.brand-flex {
    width: 163px;
    padding-right: 8px;
    text-align: right;
    color: #064a82;
    font: italic 700 16px/20px Roboto, sans-serif;
}

.brand-flex b {
    color: #e8412c;
}

.brand-flex sup {
    color: #e8412c;
    font-size: 16px;
    line-height: 0;
    vertical-align: 3px;
}

.brand-flex .three {
    color: inherit;
}

/* Work panel */
.stage {
    display: flex;
}

.expand-btn {
    width: 12px;
    height: 36px;
    background: none;
}

.expand-btn svg {
    width: 7px;
    height: 13px;
    margin-left: 2px;
    color: #000;
    stroke-width: 6;
}

.panel {
    flex: 1;
    min-width: 0;
    padding: 7px 8px 7px 7px;
    background: #fff;
}

.view {
    width: 100%;
    stroke: none;
    overflow: hidden;
}

.view-no {
    font-size: 25px;
    fill: #e6ecf5;
}

.splitter {
    display: flex;
    align-items: center;
    justify-content: center;
    height: 11px;
    border: 1px solid #909090;
    background: linear-gradient(#e8e8e8, #a4a4a4);
}

.splitter span {
    width: 10px;
    height: 4px;
    border: solid #777;
    border-width: 1px 0;
}

.tools {
    display: flex;
    align-items: center;
    gap: 7px;
    margin: 8px 0 7px;
    height: 19px;
}

.tool-btn {
    display: flex;
    align-items: center;
    justify-content: center;
    width: 23px;
    height: 19px;
    border: 1px solid var(--line);
    background: linear-gradient(#ececec, #b6b6b6);
    color: #000;
}

.tool-btn svg {
    flex: none;
    width: 13px;
    height: 13px;
    stroke-width: 3;
}

.tool-btn.thin svg {
    stroke-width: 2;
}

.tool-btn.go {
    color: #0a8a14;
}

.tool-btn.go svg {
    fill: #0a8a14;
}

.split-btn {
    display: flex;
}

.split-btn .tool-btn {
    width: 19px;
}

.tools .status:first-of-type {
    margin-left: 73px;
}

.status {
    width: 38px;
}

.tools label {
    margin-left: 3px;
    margin-right: 43px;
}

.command {
    flex: 1;
    display: flex;
    height: 16px;
    border: 1px solid #999;
    background: #d4d4d4;
}

.command .text-box {
    flex: 1;
    min-width: 0;
    border: none;
    background: none;
}

.command .grey-btn {
    width: 12px;
}

.tool-btn.sliders {
    color: #666;
}

.lists {
    display: grid;
    grid-template-columns: 260fr 419fr;
    gap: 7px;
    height: 51px;
}

.tree {
    display: flex;
    overflow: hidden;
    border: 1px solid #8a8a8a;
    background: #e5e8ee;
}

.tree-lines {
    flex: none;
    width: 78px;
    height: 50px;
    stroke: #9a9a9a;
    stroke-dasharray: 1 1;
}

.tree ul {
    flex: 1;
    list-style: none;
    font-weight: bold;
}

.tree li {
    display: flex;
    align-items: center;
    gap: 3px;
    height: 22px;
}

.tree li svg {
    width: 20px;
    height: 20px;
    stroke: #666;
    stroke-width: 2;
}

.tree li span {
    padding: 5px 1px;
}

.tree .selected span {
    background: var(--accent);
    color: #fff;
}

.scroll {
    display: flex;
    flex-direction: column;
    justify-content: space-between;
    width: 13px;
    background: #d8d8d8;
    border-left: 1px solid #999;
}

.scroll button,
.thumb {
    height: 13px;
    border: 1px solid #999;
    background: linear-gradient(90deg, #ededed, #b4b4b4);
}

.thumb {
    height: 8px;
    margin-bottom: 9px;
}

.log {
    resize: none;
}

/* Side soft keys */
.side {
    display: flex;
    flex-direction: column;
    gap: 2px;
    padding-top: 1px;
}

.side-key {
    position: relative;
    flex: 1;
    display: flex;
    flex-direction: column;
    align-items: center;
    justify-content: center;
    padding-top: 6px;
    border-bottom: 1px solid #989898;
    background: linear-gradient(#eeeeee, #a0a0a0);
    color: #3c3c3c;
    font-size: 12px;
    font-weight: bold;
    line-height: 15px;
}

.side-key svg {
    width: 22px;
    height: 22px;
}

.side-key .model {
    width: 16px;
    height: 18px;
    margin: 2px 0;
    fill: #2c2c2c;
    stroke: none;
}

.model .cut {
    fill: none;
    stroke: #aaa;
    stroke-width: 3;
}

.side-key.dark svg,
.f-key.dark svg {
    color: #111;
}

.side-key.active {
    background: var(--accent);
    border-color: var(--accent);
    color: #fff;
}

kbd {
    position: absolute;
    top: 1px;
    right: 3px;
    font: 7px/9px "Liberation Sans", sans-serif;
}

.side-key kbd {
    top: 31px;
    right: 4px;
}

/* Function keys */
.f-keys {
    display: grid;
    grid-template-columns: repeat(11, 1fr);
    gap: 2px;
}

.f-key {
    position: relative;
    display: flex;
    flex-direction: column;
    align-items: center;
    justify-content: space-between;
    height: 37px;
    padding: 1px 0;
    border-right: 1px solid #cbd4e2;
    background: linear-gradient(#f9fafc, #a8b8cf);
    color: #444;
    font-size: 10px;
    font-weight: bold;
    line-height: 12px;
}

.f-key svg {
    width: 22px;
    height: 22px;
}

.f-key .fine {
    stroke-width: 3;
}

.f-key .caret {
    position: absolute;
    top: 2px;
    left: 3px;
    width: 8px;
    height: 5px;
}

.f-key:disabled {
    border: 1px solid #c0c0c4;
    padding: 0;
    background: none;
    color: #bdbdbf;
}

/* Application bar */
.app-bar {
    display: grid;
    grid-template-columns: repeat(11, 1fr) 71px;
    column-gap: 3px;
    padding: 2px 6px 2px 0;
    border-bottom: 1px solid #ccd0d6;
    border-top: 1px solid #b9c3d2;
}

.app-btn {
    display: flex;
    flex-direction: column;
    align-items: center;
    justify-content: space-between;
    height: 40px;
    padding: 4px 0 2px;
    border-right: 1px solid #c3cddc;
    background: linear-gradient(#f5f7fa, #8fa7c7);
    color: #111;
    font-size: 11px;
    line-height: 14px;
}

.app-btn svg {
    width: 18px;
    height: 17px;
    stroke-width: 3;
}

.app-btn .unit {
    stroke-width: 1;
}

.app-btn .wide {
    width: 48px;
}

.app-btn .keyboard {
    width: 28px;
}

.app-btn .fill {
    fill: #000;
    stroke: none;
}

.app-btn.last {
    margin-left: 8px;
}

.app-btn:disabled {
    color: #8d949e;
}

/* Tabs */
.tab-bar {
    display: flex;
    align-items: center;
    gap: 8px;
    height: 24px;
    padding-right: 10px;
    border-bottom: 2px solid #0f74d8;
}

.tabs {
    flex: 1;
    display: flex;
    align-self: flex-end;
    gap: 1px;
}

.tab {
    width: 116px;
    height: 18px;
    background: linear-gradient(#f2f4f7, #a9bccf);
    color: #333;
    font-size: 11px;
    font-weight: bold;
}

.tab.active {
    background: var(--frame);
    color: #fff;
}

.mini-btn {
    display: flex;
    justify-content: center;
    align-items: center;
    width: 23px;
    height: 12px;
    background: linear-gradient(#f8fafc, #b4c6dc);
}

.mini-btn svg {
    width: 8px;
    height: 8px;
    stroke: none;
}

/* Machine panel */
.machine-panel {
    flex: 1;
    display: flex;
    align-items: flex-start;
    gap: 46px;
    padding: 11px 21px 11px 12px;
    background: var(--panel);
}

.group {
    display: grid;
    gap: 8px 11px;
}

.modes-group {
    flex: 166 1 0;
    grid-template-columns: repeat(2, 1fr);
    margin-right: 4px;
}

.machine-group {
    flex: 428 1 0;
    grid-template-columns: repeat(5, 1fr);
}

.page-group {
    flex: 77 1 0;
}

.key {
    display: flex;
    flex-direction: column;
    align-items: center;
    gap: 2px;
    height: 57px;
    padding-top: 6px;
    border-top: 7px solid transparent;
    background: var(--key);
    background-clip: padding-box;
    color: #fff;
    font-size: 11px;
    line-height: 14px;
}

.key.lit {
    border-top-color: #00ff00;
}

.key svg {
    width: 34px;
    height: 24px;
    stroke-width: 4;
}

.solid {
    fill: #fff;
    stroke: none;
}

.key .long {
    font-size: 9px;
}

.key .num {
    font-size: 13px;
}

.key.page {
    justify-content: center;
    padding: 0;
    font-size: 15px;
    font-weight: bold;
    line-height: 18px;
}
```
